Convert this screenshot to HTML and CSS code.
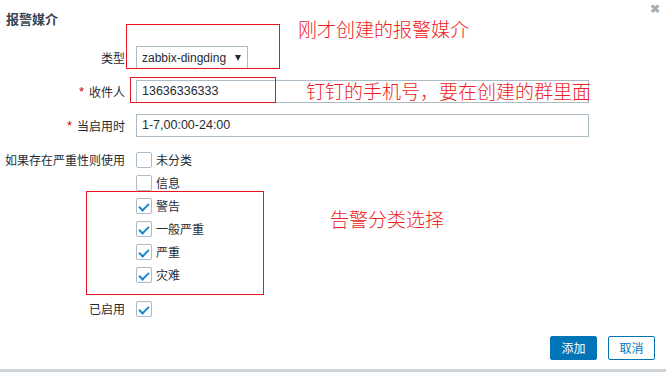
FILE: index.html
```html
<!DOCTYPE html>
<html lang="zh-CN">
<head>
<meta charset="utf-8">
<link rel="stylesheet" href="styles.css">
</head>
<body>
<div class="dialog">
  <div class="head">
    <div class="title">报警媒介</div>
    <span class="close">✖</span>
  </div>
  <div class="form">
    <div class="label">类型</div>
    <div class="ctrl"><div class="select"><span>zabbix-dingding</span><span class="arrow"></span></div></div>

    <div class="label"><span class="star">*</span>收件人</div>
    <div class="ctrl"><div class="input">13636336333</div></div>

    <div class="label"><span class="star">*</span>当启用时</div>
    <div class="ctrl"><div class="input">1-7,00:00-24:00</div></div>

    <div class="label">如果存在严重性则使用</div>
    <div class="ctrl list">
      <div class="item"><span class="cb"></span>未分类</div>
      <div class="item"><span class="cb"></span>信息</div>
      <div class="item"><span class="cb on"></span>警告</div>
      <div class="item"><span class="cb on"></span>一般严重</div>
      <div class="item"><span class="cb on"></span>严重</div>
      <div class="item"><span class="cb on"></span>灾难</div>
    </div>

    <div class="label">已启用</div>
    <div class="ctrl"><div class="item"><span class="cb on"></span></div></div>
  </div>
  <div class="buttons">
    <div class="btn primary">添加</div>
    <div class="btn">取消</div>
  </div>
  <div class="bar"></div>

  <div class="mark m1"></div>
  <div class="mark m2"></div>
  <div class="mark m3"></div>
  <div class="note n1">刚才创建的报警媒介</div>
  <div class="note n2">钉钉的手机号，要在创建的群里面</div>
  <div class="note n3">告警分类选择</div>
</div>
</body>
</html>
```

FILE: styles.css
```css
* { box-sizing: border-box; }
html, body { margin: 0; padding: 0; background: #fff; }
body {
  font-family: "Liberation Sans", Arial, "Noto Sans CJK SC", sans-serif;
  font-size: 12px;
  color: #1f2c33;
}
.dialog {
  position: relative;
  width: 666px;
  height: 372px;
  display: flex;
  flex-direction: column;
}
.head {
  display: flex;
  justify-content: space-between;
  padding: 9px 6px 0 6px;
  height: 29px;
}
.title {
  font-family: "Noto Sans CJK SC", sans-serif;
  font-weight: bold;
  font-size: 13px;
  line-height: 20px;
  color: #384451;
}
.close {
  position: absolute;
  top: 2px;
  right: 6px;
  font-size: 12px;
  font-weight: bold;
  color: #a3b0b8;
  line-height: 14px;
}
.form {
  margin-top: 17px;
  display: grid;
  grid-template-columns: 125px 453px;
  column-gap: 11px;
  row-gap: 11px;
  align-items: start;
}
.label {
  height: 23px;
  display: flex;
  align-items: center;
  justify-content: flex-end;
  gap: 5px;
  font-family: "Noto Sans CJK SC", sans-serif;
  white-space: nowrap;
}
.star {
  color: #d40000;
  font-family: "Liberation Sans", sans-serif;
  font-size: 13px;
  line-height: 12px;
  height: 12px;
}
.select {
  width: 112px;
  height: 23px;
  border: 1px solid #acbbc4;
  display: flex;
  align-items: center;
  justify-content: space-between;
  padding: 0 6px 0 5px;
}
.arrow {
  width: 0;
  height: 0;
  border-left: 3.5px solid transparent;
  border-right: 3.5px solid transparent;
  border-top: 6px solid #1f2c33;
}
.input {
  width: 453px;
  height: 23px;
  border: 1px solid #acbbc4;
  line-height: 21px;
  padding-left: 5px;
  font-size: 12.5px;
}
.list { display: flex; flex-direction: column; }
.item {
  height: 23px;
  display: flex;
  align-items: center;
  gap: 4px;
  font-family: "Noto Sans CJK SC", sans-serif;
}
.cb {
  width: 16px;
  height: 16px;
  border: 1px solid #acbbc4;
  border-radius: 2px;
  position: relative;
  background: #fff;
}
.cb.on::after {
  content: "";
  position: absolute;
  left: 4px;
  top: 2px;
  width: 4px;
  height: 8px;
  border-right: 2px solid #1e87cc;
  border-bottom: 2px solid #1e87cc;
  transform: rotate(45deg);
}
.buttons {
  margin-top: 16px;
  display: flex;
  justify-content: flex-end;
  gap: 11px;
  padding-right: 11px;
}
.btn {
  width: 47px;
  height: 24px;
  border: 1px solid #0275b8;
  border-radius: 2px;
  color: #0275b8;
  text-align: center;
  line-height: 22px;
  font-family: "Noto Sans CJK SC", sans-serif;
  font-size: 12px;
}
.btn.primary { background: #0275b8; color: #fff; }
.bar {
  margin-top: auto;
  height: 3px;
  background: #ced4d8;
}
.mark {
  position: absolute;
  border: 1px solid #e5161f;
}
.m1 { left: 126px; top: 24px; width: 154px; height: 45px; }
.m2 { left: 130px; top: 77px; width: 146px; height: 26px; }
.m3 { left: 86px; top: 191px; width: 178px; height: 104px; }
.note {
  position: absolute;
  color: #ee1c24;
  font-family: "Noto Sans CJK SC", sans-serif;
  font-size: 19px;
  font-weight: 300;
  line-height: 22px;
  white-space: nowrap;
}
.n1 { left: 298px; top: 18px; }
.n2 { left: 306px; top: 80px; }
.n3 { left: 330px; top: 208px; }
```
